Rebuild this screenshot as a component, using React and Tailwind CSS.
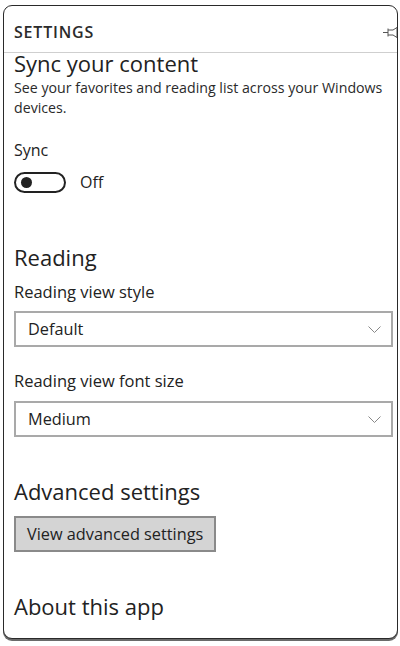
export default function App() {
  const font = { fontFamily: '"Open Sans", "Noto Sans", sans-serif' };
  return (
    <div className="w-[400px] h-[646px] bg-white pt-[5px] pl-[3px] pr-[2px]" style={font}>
      <div className="relative h-[634px] rounded-[9px] border-[1.5px] border-[#2a2a2a] bg-white shadow-[0_2px_0_#6a6a6a] overflow-hidden flex flex-col">
        {/* Panel header */}
        <div className="h-[47px] shrink-0 flex items-center justify-between pl-[10px] border-b border-[#cfcfcf]">
          <span className="text-[16px] font-semibold tracking-[0.05em] text-[#2b2b2b] mt-[6px]">SETTINGS</span>
          <svg width="16" height="12" viewBox="0 0 16 12" className="mt-[6px] -mr-[2px]" fill="none" stroke="#555" strokeWidth="1">
            <path d="M0 6.5h5" />
            <path d="M5 2.5v8" />
            <path d="M5 4h5l4-2.5v10l-4-2.5H5" />
          </svg>
        </div>

        {/* Scrolled content */}
        <div className="flex-1 overflow-hidden pl-[10px] pr-[3px] text-[#222]">
          <h2 className="text-[22px] leading-[26px] -mt-[3px]">Sync your content</h2>
          <p className="text-[14.2px] leading-[20px] mt-[2px] text-[#2a2a2a]">
            See your favorites and reading list across your Windows devices.
          </p>

          <div className="mt-[22px] text-[16px] leading-[20px]">Sync</div>
          <div className="mt-[10px] flex items-center gap-[14px]">
            <div className="w-[52px] h-[21px] rounded-full border-2 border-[#222] flex items-center pl-[5px]">
              <div className="w-[11px] h-[11px] rounded-full bg-[#222]" />
            </div>
            <span className="text-[16px]">Off</span>
          </div>

          <h2 className="mt-[50px] text-[22px] leading-[26px]">Reading</h2>
          <div className="mt-[12px] text-[16.5px] leading-[20px]">Reading view style</div>
          <div className="mt-[9px] h-[36px] border-2 border-[#a9a9a9] flex items-center justify-between pl-[12px] pr-[10px] mr-[1px]">
            <span className="text-[16.3px]">Default</span>
            <svg width="13" height="7" viewBox="0 0 13 7" fill="none" stroke="#888" strokeWidth="1">
              <path d="M0.5 0.5l6 6 6-6" />
            </svg>
          </div>

          <div className="mt-[24px] text-[16.5px] leading-[20px]">Reading view font size</div>
          <div className="mt-[10px] h-[36px] border-2 border-[#a9a9a9] flex items-center justify-between pl-[12px] pr-[10px] mr-[1px]">
            <span className="text-[16.3px]">Medium</span>
            <svg width="13" height="7" viewBox="0 0 13 7" fill="none" stroke="#888" strokeWidth="1">
              <path d="M0.5 0.5l6 6 6-6" />
            </svg>
          </div>

          <h2 className="mt-[41px] text-[22px] leading-[26px]">Advanced settings</h2>
          <button className="mt-[12px] h-[36px] px-[11px] bg-[#d4d4d4] border-2 border-[#8a8a8a] text-[16.3px] text-[#222]">
            View advanced settings
          </button>

          <h2 className="mt-[41px] text-[22px] leading-[26px]">About this app</h2>
        </div>
      </div>
    </div>
  );
}
